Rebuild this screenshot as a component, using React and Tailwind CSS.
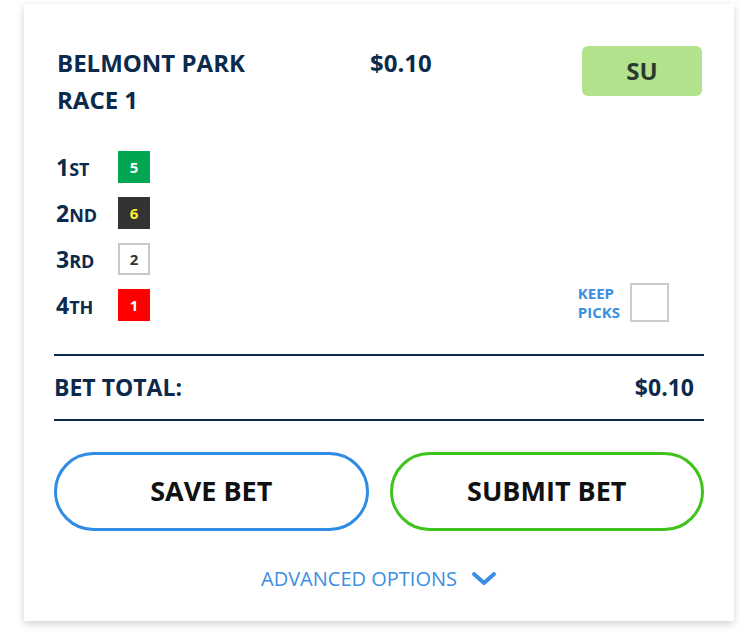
import React from 'react';

const navy = 'text-[#0b2a4c]';

const picks = [
  { num: '1', suf: 'ST', horse: '5', box: 'bg-[#00a651] text-white border-[#00a651]' },
  { num: '2', suf: 'ND', horse: '6', box: 'bg-[#333333] text-[#ffee33] border-[#333333]' },
  { num: '3', suf: 'RD', horse: '2', box: 'bg-white text-[#333333] border-[#c8c8c8]' },
  { num: '4', suf: 'TH', horse: '1', box: 'bg-[#ff0000] text-white border-[#ff0000]' },
];

const ChevronDown = () => (
  <svg width="26" height="16" viewBox="0 0 26 16" fill="none">
    <polyline points="3,3 13,12 23,3" stroke="#3a8fe3" strokeWidth="4" strokeLinecap="round" strokeLinejoin="round" />
  </svg>
);

export default function App() {
  return (
    <div className="w-[740px] h-[636px] bg-white pt-[4px] pl-[24px]" style={{ fontFamily: '"Open Sans", sans-serif' }}>
      <div className="w-[710px] h-[617px] bg-white shadow-[0_3px_8px_rgba(0,0,0,0.18)] px-[30px] pt-[40px]">
        {/* Header */}
        <div className="flex items-start">
          <div className={`w-[316px] pl-[3px] text-[24px] font-bold leading-[37px] ${navy}`}>
            <div>BELMONT PARK</div>
            <div>RACE 1</div>
          </div>
          <div className={`text-[24px] font-bold leading-[37px] ${navy}`}>$0.10</div>
          <div className="ml-auto mr-[2px] mt-[2px] w-[120px] h-[50px] rounded-[6px] bg-[#b3e28c] flex items-center justify-center text-[24px] font-bold text-[#2b3a2c]">
            SU
          </div>
        </div>

        {/* Picks */}
        <div className="flex items-end mt-[33px]">
          <div className="flex flex-col gap-[14px]">
            {picks.map((p) => (
              <div key={p.num} className="flex items-center h-[32px]">
                <div className={`w-[64px] pl-[2px] font-bold ${navy}`}>
                  <span className="text-[23px]">{p.num}</span>
                  <span className="text-[18px]">{p.suf}</span>
                </div>
                <div className={`w-[32px] h-[32px] border-2 flex items-center justify-center text-[15px] font-bold ${p.box}`}>
                  {p.horse}
                </div>
              </div>
            ))}
          </div>
          <div className="ml-auto mr-[35px] mb-[-1px] flex items-center gap-[10px]">
            <div className="text-[15px] font-bold leading-[19px] text-[#3a8fe3]">
              <div>KEEP</div>
              <div>PICKS</div>
            </div>
            <div className="w-[39px] h-[39px] border-2 border-[#cccccc] bg-white" />
          </div>
        </div>

        {/* Bet total */}
        <div className={`mt-[33px] border-t-2 border-b-2 border-[#0b2a4c] h-[67px] flex items-center justify-between pr-[10px] text-[23px] font-bold ${navy}`}>
          <span>BET TOTAL:</span>
          <span>$0.10</span>
        </div>

        {/* Buttons */}
        <div className="flex gap-[21px] mt-[31px]">
          <button className="flex-1 h-[79px] rounded-full border-[3px] border-[#2f8be3] bg-white text-[27px] font-bold text-[#111111]">
            SAVE BET
          </button>
          <button className="flex-1 h-[79px] rounded-full border-[3px] border-[#3fc41d] bg-white text-[27px] font-bold text-[#111111]">
            SUBMIT BET
          </button>
        </div>

        {/* Advanced */}
        <div className="flex items-center justify-center gap-[14px] mt-[33px] text-[20px] text-[#3a8fe3]">
          <span>ADVANCED OPTIONS</span>
          <ChevronDown />
        </div>
      </div>
    </div>
  );
}
